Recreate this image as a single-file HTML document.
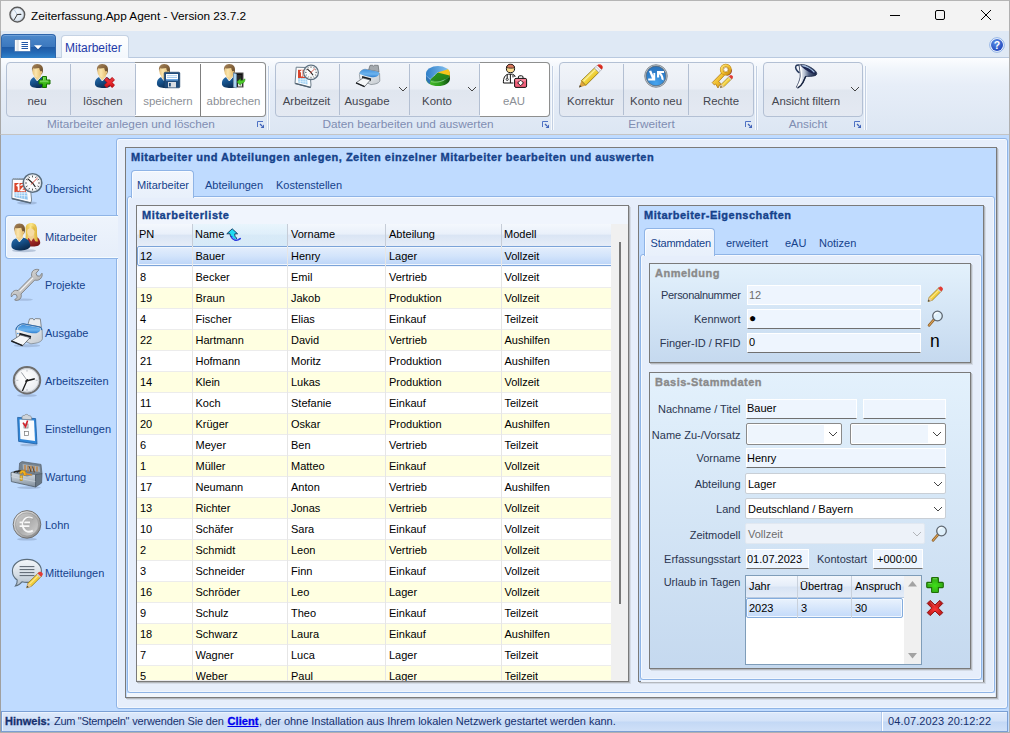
<!DOCTYPE html>
<html><head><meta charset="utf-8"><title>Zeiterfassung.App Agent</title>
<style>
*{box-sizing:border-box;margin:0;padding:0}
html,body{width:1010px;height:733px;overflow:hidden}
body{background:#bfdbff;font-family:"Liberation Sans",sans-serif;font-size:11px;color:#000;position:relative}
.a{position:absolute}
svg{position:absolute;overflow:visible}
.t{position:absolute;white-space:nowrap;line-height:14px;font-size:11px}
#title{left:0;top:0;width:1010px;height:31px;background:#f3f3f3;border-top:1px solid #b5b5b5;border-left:1px solid #b4b4b4}
#title .cap{left:30px;top:7px;font-size:11.8px;line-height:16px;color:#000}
#tabrow{left:0;top:31px;width:1010px;height:27px;background:#dfe9f5;border-left:1px solid #a8a8a8;border-bottom:1px solid #b9c9df}
#appbtn{left:1px;top:34px;width:55px;height:24px;border-radius:4px 4px 0 0;background:linear-gradient(#4d89cb 0%,#3c78be 50%,#1f5ba6 54%,#2468b4 75%,#3182cb 100%);border:1px solid #2f66ab;border-bottom:none;box-shadow:inset 0 1px 0 #6ea0d8}
#rtab{left:61px;top:35px;width:68px;height:23px;border-radius:4px 4px 0 0;background:linear-gradient(#ffffff,#f3f7fc);border:1px solid #c5d2e3;border-bottom:none}
#rtab span{left:3px;top:5px;font-size:12px;color:#1e39a8}
#ribbon{left:0;top:58px;width:1010px;height:77px;background:linear-gradient(#fcfdff 0%,#f0f5fb 15%,#e7eef8 35%,#dce6f3 100%);border-left:1px solid #a8a8a8;border-bottom:1px solid #c4c4c4}
.grp{border:1px solid #b3c0d4;border-radius:4px;background:linear-gradient(#f1f4f9 0%,#eaeef5 48%,#e0e6ef 52%,#e4e9f2 100%)}
.rsep{width:1px;background:#b3bfd2}
.rlab{font-size:11.4px;color:#44464f;text-align:center;line-height:15px}
.rlab.dis{color:#8b8f96}
.gcap{font-size:11.8px;color:#7f8db2;text-align:center;line-height:15px}
.gdiv{width:3px;top:66px;height:64px;background:linear-gradient(90deg,#f7fafd 0,#f7fafd 1px,#c3d0e3 1px,#c3d0e3 2px,#f7fafd 2px)}
.wbtn{background:#fff;border:1px solid #8e8f8f}
.page{border:1px solid #8fb4e6;border-radius:3px;box-shadow:inset 1px 1px 0 #f6f9fe,inset -1px -1px 0 #f1f6fd;background:#e6eefb}
.gbox{border:1px solid #7a7a7a;box-shadow:1px 1px 0 #b4b8be,2px 2px 0 rgba(190,195,205,.45);background:#bfdbff}
.gt{font-weight:bold;color:#15428b;font-size:11px;letter-spacing:.5px;-webkit-text-stroke:.35px currentColor}
.tab{border:1px solid #8fb4e6;border-bottom:none;border-radius:4px 4px 0 0;background:linear-gradient(#f0f5fd,#e8f0fb);box-shadow:inset 1px 1px 0 #fafcff}
.tl{color:#15428b}
.side{color:#15428b;left:45px;z-index:2}
.lab{color:#2b3650;text-align:right;left:639.5px;width:101px}
.inp{background:#eef5fe;border:1px solid #fff;border-bottom-color:#707070;height:20px}
.inp.dis{border-color:#fff}
.cmb{background:#fff;border:1px solid #8a8a8a;border-radius:2px;height:21px}
.cmb2{background:#fff;border:1px solid #c9cfd6;border-radius:2px;height:21px}
.row{left:137px;width:474px;height:21px;border-bottom:1px solid #ececec}
.row.y{background:#ffffe1}
.row.w{background:#fff}
.vs{width:1px;background:#e6e6e6}
.sel{border:1px solid #7ba3d8;border-radius:2px;background:linear-gradient(#e4eefc 0%,#d3e4fb 50%,#bcd5f8 100%);box-shadow:inset 0 0 0 1px #f1f7fe}
.hdr{background:linear-gradient(#f4f8fd 0%,#e6eef9 45%,#d8e4f4 55%,#e4ecf8 100%);border-bottom:1px solid #b9cbe2}
</style></head><body>
<div id="title" class="a"><div class="t cap">Zeiterfassung.App Agent - Version 23.7.2</div></div>
<div id="tabrow" class="a"></div>
<div id="appbtn" class="a"></div>
<div id="rtab" class="a"><span class="t">Mitarbeiter</span></div>
<div id="ribbon" class="a"></div>

<!-- ribbon groups -->
<div class="a grp" style="left:6px;top:62px;width:260px;height:55px"></div>
<div class="a wbtn" style="left:135px;top:62px;width:131px;height:55px;border-radius:0 4px 4px 0;border-left:none"></div>
<div class="a rsep" style="left:70px;top:64px;height:51px"></div>
<div class="a rsep" style="left:135px;top:64px;height:51px"></div>
<div class="a rsep" style="left:200px;top:64px;height:52px;background:#7f7f7f"></div>
<div class="a rlab" style="left:5px;top:94px;width:64px">neu</div>
<div class="a rlab" style="left:71px;top:94px;width:64px">löschen</div>
<div class="a rlab dis" style="left:136px;top:94px;width:64px">speichern</div>
<div class="a rlab dis" style="left:201px;top:94px;width:65px">abbrechen</div>
<div class="a gcap" style="left:6px;top:117px;width:250px">Mitarbeiter anlegen und löschen</div>
<div class="a gdiv" style="left:267px"></div>

<div class="a grp" style="left:275px;top:62px;width:275px;height:55px"></div>
<div class="a wbtn" style="left:480px;top:62px;width:70px;height:55px;border-radius:0 4px 4px 0;border-left:none"></div>
<div class="a rsep" style="left:339px;top:64px;height:51px"></div>
<div class="a rsep" style="left:409px;top:64px;height:51px"></div>
<div class="a rsep" style="left:479px;top:64px;height:51px"></div>
<div class="a rlab" style="left:275px;top:94px;width:63px">Arbeitzeit</div>
<div class="a rlab" style="left:340px;top:94px;width:54px">Ausgabe</div>
<div class="a rlab" style="left:410px;top:94px;width:54px">Konto</div>
<div class="a rlab dis" style="left:479px;top:94px;width:70px">eAU</div>
<div class="a gcap" style="left:276px;top:117px;width:264px">Daten bearbeiten und auswerten</div>
<div class="a gdiv" style="left:551px"></div>

<div class="a grp" style="left:559px;top:62px;width:195px;height:55px"></div>
<div class="a rsep" style="left:623px;top:64px;height:51px"></div>
<div class="a rsep" style="left:688px;top:64px;height:51px"></div>
<div class="a rlab" style="left:559px;top:94px;width:63px">Korrektur</div>
<div class="a rlab" style="left:624px;top:94px;width:64px">Konto neu</div>
<div class="a rlab" style="left:689px;top:94px;width:64px">Rechte</div>
<div class="a gcap" style="left:560px;top:117px;width:183px">Erweitert</div>
<div class="a gdiv" style="left:755px"></div>

<div class="a grp" style="left:763px;top:62px;width:100px;height:55px"></div>
<div class="a rlab" style="left:763px;top:94px;width:86px">Ansicht filtern</div>
<div class="a gcap" style="left:763px;top:117px;width:90px">Ansicht</div>
<div class="a gdiv" style="left:864px"></div>

<!-- sidebar --><div class="a" style="left:0;top:135px;width:1px;height:598px;background:#a0a0a0"></div>
<div class="t side" style="top:182px">Übersicht</div>
<div class="t side" style="top:230px">Mitarbeiter</div>
<div class="t side" style="top:278px">Projekte</div>
<div class="t side" style="top:326px">Ausgabe</div>
<div class="t side" style="top:374px">Arbeitszeiten</div>
<div class="t side" style="top:422px">Einstellungen</div>
<div class="t side" style="top:470px">Wartung</div>
<div class="t side" style="top:518px">Lohn</div>
<div class="t side" style="top:566px">Mitteilungen</div>

<!-- level 1 -->
<div class="a page" id="p1" style="left:116px;top:138px;width:892px;height:571px"></div>
<div class="a" style="left:5px;top:215px;width:113px;height:44px;border:1px solid #8fb4e6;border-right:none;border-radius:4px 0 0 4px;background:linear-gradient(#eef4fc,#e6eefa);box-shadow:inset 1px 1px 0 #f4fbff,inset 0 -1px 0 #f4fbff"></div>
<div class="a gbox" id="g1" style="left:125px;top:147px;width:872px;height:551px"></div>
<div class="t gt" style="left:131px;top:150px">Mitarbeiter und Abteilungen anlegen, Zeiten einzelner Mitarbeiter bearbeiten und auswerten</div>
<div class="a" style="left:127px;top:693px;width:869px;height:4px;background:#f1f6fd"></div>
<div class="a" style="left:995px;top:200px;width:1px;height:497px;background:#dbe8fb"></div>
<div class="a page" id="p2" style="left:127px;top:196px;width:868px;height:497px"></div>
<div class="a tab" style="left:131px;top:170px;width:63px;height:28px"></div>
<div class="t tl" style="left:137px;top:178px">Mitarbeiter</div>
<div class="t tl" style="left:205px;top:178px">Abteilungen</div>
<div class="t tl" style="left:276px;top:178px">Kostenstellen</div>

<!-- list -->
<div class="a gbox" id="g2a" style="left:136px;top:205px;width:493px;height:477px;background:#f0f5fd;overflow:hidden"></div>
<div class="t gt" style="left:142px;top:208px;letter-spacing:.58px">Mitarbeiterliste</div>
<div class="a" id="thead" style="left:137px;top:224px;width:474px;height:22px;background:linear-gradient(#f4f8fd 0%,#e9f0fa 45%,#dae5f4 52%,#e6edf8 100%)"></div>
<div class="a" style="left:193px;top:224px;width:94px;height:22px;background:linear-gradient(rgba(225,243,252,.6),rgba(205,232,248,.6))"></div>
<div class="a" style="left:611px;top:224px;width:17px;height:457px;background:#f0f0f0"></div>
<div class="a" style="left:619px;top:242px;width:2px;height:362px;background:#777"></div>
<div class="a sel" style="left:137px;top:246px;width:480px;height:20px;clip-path:inset(0 6px 0 0)"></div>
<div class="t" style="left:140px;top:249px">12</div>
<div class="t" style="left:195.5px;top:249px">Bauer</div>
<div class="t" style="left:291px;top:249px">Henry</div>
<div class="t" style="left:389px;top:249px">Lager</div>
<div class="t" style="left:504.5px;top:249px">Vollzeit</div>
<div class="a row w" style="top:267px;height:21px"></div>
<div class="t" style="left:140px;top:270px">8</div>
<div class="t" style="left:195.5px;top:270px">Becker</div>
<div class="t" style="left:291px;top:270px">Emil</div>
<div class="t" style="left:389px;top:270px">Vertrieb</div>
<div class="t" style="left:504.5px;top:270px">Vollzeit</div>
<div class="a row y" style="top:288px;height:21px"></div>
<div class="t" style="left:140px;top:291px">19</div>
<div class="t" style="left:195.5px;top:291px">Braun</div>
<div class="t" style="left:291px;top:291px">Jakob</div>
<div class="t" style="left:389px;top:291px">Produktion</div>
<div class="t" style="left:504.5px;top:291px">Vollzeit</div>
<div class="a row w" style="top:309px;height:21px"></div>
<div class="t" style="left:140px;top:312px">4</div>
<div class="t" style="left:195.5px;top:312px">Fischer</div>
<div class="t" style="left:291px;top:312px">Elias</div>
<div class="t" style="left:389px;top:312px">Einkauf</div>
<div class="t" style="left:504.5px;top:312px">Teilzeit</div>
<div class="a row y" style="top:330px;height:21px"></div>
<div class="t" style="left:140px;top:333px">22</div>
<div class="t" style="left:195.5px;top:333px">Hartmann</div>
<div class="t" style="left:291px;top:333px">David</div>
<div class="t" style="left:389px;top:333px">Vertrieb</div>
<div class="t" style="left:504.5px;top:333px">Aushilfen</div>
<div class="a row w" style="top:351px;height:21px"></div>
<div class="t" style="left:140px;top:354px">21</div>
<div class="t" style="left:195.5px;top:354px">Hofmann</div>
<div class="t" style="left:291px;top:354px">Moritz</div>
<div class="t" style="left:389px;top:354px">Produktion</div>
<div class="t" style="left:504.5px;top:354px">Aushilfen</div>
<div class="a row y" style="top:372px;height:21px"></div>
<div class="t" style="left:140px;top:375px">14</div>
<div class="t" style="left:195.5px;top:375px">Klein</div>
<div class="t" style="left:291px;top:375px">Lukas</div>
<div class="t" style="left:389px;top:375px">Produktion</div>
<div class="t" style="left:504.5px;top:375px">Vollzeit</div>
<div class="a row w" style="top:393px;height:21px"></div>
<div class="t" style="left:140px;top:396px">11</div>
<div class="t" style="left:195.5px;top:396px">Koch</div>
<div class="t" style="left:291px;top:396px">Stefanie</div>
<div class="t" style="left:389px;top:396px">Einkauf</div>
<div class="t" style="left:504.5px;top:396px">Teilzeit</div>
<div class="a row y" style="top:414px;height:21px"></div>
<div class="t" style="left:140px;top:417px">20</div>
<div class="t" style="left:195.5px;top:417px">Krüger</div>
<div class="t" style="left:291px;top:417px">Oskar</div>
<div class="t" style="left:389px;top:417px">Produktion</div>
<div class="t" style="left:504.5px;top:417px">Aushilfen</div>
<div class="a row w" style="top:435px;height:21px"></div>
<div class="t" style="left:140px;top:438px">6</div>
<div class="t" style="left:195.5px;top:438px">Meyer</div>
<div class="t" style="left:291px;top:438px">Ben</div>
<div class="t" style="left:389px;top:438px">Vertrieb</div>
<div class="t" style="left:504.5px;top:438px">Teilzeit</div>
<div class="a row y" style="top:456px;height:21px"></div>
<div class="t" style="left:140px;top:459px">1</div>
<div class="t" style="left:195.5px;top:459px">Müller</div>
<div class="t" style="left:291px;top:459px">Matteo</div>
<div class="t" style="left:389px;top:459px">Einkauf</div>
<div class="t" style="left:504.5px;top:459px">Vollzeit</div>
<div class="a row w" style="top:477px;height:21px"></div>
<div class="t" style="left:140px;top:480px">17</div>
<div class="t" style="left:195.5px;top:480px">Neumann</div>
<div class="t" style="left:291px;top:480px">Anton</div>
<div class="t" style="left:389px;top:480px">Vertrieb</div>
<div class="t" style="left:504.5px;top:480px">Aushilfen</div>
<div class="a row y" style="top:498px;height:21px"></div>
<div class="t" style="left:140px;top:501px">13</div>
<div class="t" style="left:195.5px;top:501px">Richter</div>
<div class="t" style="left:291px;top:501px">Jonas</div>
<div class="t" style="left:389px;top:501px">Vertrieb</div>
<div class="t" style="left:504.5px;top:501px">Vollzeit</div>
<div class="a row w" style="top:519px;height:21px"></div>
<div class="t" style="left:140px;top:522px">10</div>
<div class="t" style="left:195.5px;top:522px">Schäfer</div>
<div class="t" style="left:291px;top:522px">Sara</div>
<div class="t" style="left:389px;top:522px">Einkauf</div>
<div class="t" style="left:504.5px;top:522px">Vollzeit</div>
<div class="a row y" style="top:540px;height:21px"></div>
<div class="t" style="left:140px;top:543px">2</div>
<div class="t" style="left:195.5px;top:543px">Schmidt</div>
<div class="t" style="left:291px;top:543px">Leon</div>
<div class="t" style="left:389px;top:543px">Vertrieb</div>
<div class="t" style="left:504.5px;top:543px">Vollzeit</div>
<div class="a row w" style="top:561px;height:21px"></div>
<div class="t" style="left:140px;top:564px">3</div>
<div class="t" style="left:195.5px;top:564px">Schneider</div>
<div class="t" style="left:291px;top:564px">Finn</div>
<div class="t" style="left:389px;top:564px">Einkauf</div>
<div class="t" style="left:504.5px;top:564px">Vollzeit</div>
<div class="a row y" style="top:582px;height:21px"></div>
<div class="t" style="left:140px;top:585px">16</div>
<div class="t" style="left:195.5px;top:585px">Schröder</div>
<div class="t" style="left:291px;top:585px">Leo</div>
<div class="t" style="left:389px;top:585px">Lager</div>
<div class="t" style="left:504.5px;top:585px">Vollzeit</div>
<div class="a row w" style="top:603px;height:21px"></div>
<div class="t" style="left:140px;top:606px">9</div>
<div class="t" style="left:195.5px;top:606px">Schulz</div>
<div class="t" style="left:291px;top:606px">Theo</div>
<div class="t" style="left:389px;top:606px">Einkauf</div>
<div class="t" style="left:504.5px;top:606px">Teilzeit</div>
<div class="a row y" style="top:624px;height:21px"></div>
<div class="t" style="left:140px;top:627px">18</div>
<div class="t" style="left:195.5px;top:627px">Schwarz</div>
<div class="t" style="left:291px;top:627px">Laura</div>
<div class="t" style="left:389px;top:627px">Einkauf</div>
<div class="t" style="left:504.5px;top:627px">Aushilfen</div>
<div class="a row w" style="top:645px;height:21px"></div>
<div class="t" style="left:140px;top:648px">7</div>
<div class="t" style="left:195.5px;top:648px">Wagner</div>
<div class="t" style="left:291px;top:648px">Luca</div>
<div class="t" style="left:389px;top:648px">Lager</div>
<div class="t" style="left:504.5px;top:648px">Teilzeit</div>
<div class="a row y" style="top:666px;height:15px"></div>
<div class="t" style="left:140px;top:669px;height:12px;overflow:hidden">5</div>
<div class="t" style="left:195.5px;top:669px;height:12px;overflow:hidden">Weber</div>
<div class="t" style="left:291px;top:669px;height:12px;overflow:hidden">Paul</div>
<div class="t" style="left:389px;top:669px;height:12px;overflow:hidden">Lager</div>
<div class="t" style="left:504.5px;top:669px;height:12px;overflow:hidden">Teilzeit</div>
<div class="a vs" style="left:192px;top:224px;height:457px"></div>
<div class="a vs" style="left:287px;top:224px;height:457px"></div>
<div class="a vs" style="left:385px;top:224px;height:457px"></div>
<div class="a vs" style="left:501px;top:224px;height:457px"></div>
<div class="a" style="left:192px;top:224px;width:1px;height:22px;background:#c6cdd8"></div>
<div class="a" style="left:287px;top:224px;width:1px;height:22px;background:#c6cdd8"></div>
<div class="a" style="left:385px;top:224px;width:1px;height:22px;background:#c6cdd8"></div>
<div class="a" style="left:501px;top:224px;width:1px;height:22px;background:#c6cdd8"></div>
<div class="t" style="left:139px;top:227px">PN</div>
<div class="t" style="left:195px;top:227px">Name</div>
<div class="t" style="left:291px;top:227px">Vorname</div>
<div class="t" style="left:389px;top:227px">Abteilung</div>
<div class="t" style="left:504px;top:227px">Modell</div>

<!-- properties -->
<div class="a gbox" id="g2b" style="left:638px;top:205px;width:346px;height:477px"></div>
<div class="t gt" style="left:644px;top:208px">Mitarbeiter-Eigenschaften</div>
<div class="a" style="left:641px;top:680px;width:342px;height:2px;background:#eef4fd"></div>
<div class="a page" id="p3" style="left:640px;top:254px;width:342px;height:426px"></div>
<div class="a tab" style="left:644px;top:228px;width:71px;height:28px"></div>
<div class="t tl" style="left:650.5px;top:236px;letter-spacing:-.2px">Stammdaten</div>
<div class="t tl" style="left:726px;top:236px">erweitert</div>
<div class="t tl" style="left:785px;top:236px">eAU</div>
<div class="t tl" style="left:819px;top:236px">Notizen</div>

<div class="a gbox" id="g3a" style="left:649px;top:263px;width:322px;height:100px;background:linear-gradient(#e3f1fc,#c5d9ef)"></div>
<div class="t gt" style="left:655px;top:266px;color:#8a8a8a">Anmeldung</div>
<div class="t lab" style="top:288px;letter-spacing:-.3px">Personalnummer</div>
<div class="t lab" style="top:312px">Kennwort</div>
<div class="t lab" style="top:336px">Finger-ID / RFID</div>
<div class="a inp dis" style="left:747px;top:285px;width:174px;height:20px"></div>
<div class="a inp" style="left:747px;top:309px;width:174px"></div>
<div class="a inp" style="left:747px;top:333px;width:174px"></div>
<div class="t" style="left:749px;top:288px;color:#6d6d6d">12</div>
<div class="t" style="left:749px;top:311px;font-size:12px">●</div>
<div class="t" style="left:749px;top:335px">0</div>
<div class="t" style="left:930px;top:331px;font-size:17.5px;line-height:20px">n</div>

<div class="a gbox" id="g3b" style="left:649px;top:372px;width:322px;height:297px;background:linear-gradient(#e3f1fc,#c5d9ef)"></div>
<div class="t gt" style="left:655px;top:375px;color:#8a8a8a">Basis-Stammdaten</div>
<div class="t lab" style="top:402px">Nachname / Titel</div>
<div class="t lab" style="top:428px">Name Zu-/Vorsatz</div>
<div class="t lab" style="top:451px">Vorname</div>
<div class="t lab" style="top:477px">Abteilung</div>
<div class="t lab" style="top:502px">Land</div>
<div class="t lab" style="top:528px">Zeitmodell</div>
<div class="t lab" style="top:552px">Erfassungsstart</div>
<div class="t lab" style="top:575px">Urlaub in Tagen</div>
<div class="a inp" style="left:746px;top:399px;width:111px"></div>
<div class="a inp" style="left:863px;top:399px;width:83px"></div>
<div class="t" style="left:747px;top:401px">Bauer</div>
<div class="a cmb" style="left:746px;top:423px;width:96px;height:22px"><div class="a" style="left:1px;top:1px;width:76px;height:18px;background:#eef5fd"></div></div>
<div class="a cmb" style="left:850px;top:423px;width:96px;height:22px"><div class="a" style="left:1px;top:1px;width:76px;height:18px;background:#eef5fd"></div></div>
<div class="a inp" style="left:746px;top:448px;width:200px"></div>
<div class="t" style="left:747px;top:451px">Henry</div>
<div class="a cmb2" style="left:745px;top:473px;width:201px"></div>
<div class="t" style="left:748px;top:477px">Lager</div>
<div class="a cmb2" style="left:745px;top:498px;width:201px"></div>
<div class="t" style="left:748px;top:502px">Deutschland / Bayern</div>
<div class="a cmb2" style="left:745px;top:523px;width:180px;background:#edf2f9;border-color:#e1e8f1"></div>
<div class="t" style="left:748px;top:527px;color:#6d6d6d">Vollzeit</div>
<div class="a inp" style="left:746px;top:549px;width:63px"></div>
<div class="t" style="left:747px;top:552px">01.07.2023</div>
<div class="t" style="left:817px;top:552px;color:#2b3650">Kontostart</div>
<div class="a inp" style="left:873px;top:549px;width:50px"></div>
<div class="t" style="left:877px;top:552px">+000:00</div>

<!-- urlaub table -->
<div class="a" style="left:745px;top:575px;width:177px;height:90px;background:#fff;border:1px solid #7f9db9"></div>
<div class="a" style="left:746px;top:576px;width:158px;height:22px;background:linear-gradient(#f4f8fd 0%,#e6eef9 45%,#d8e4f4 55%,#e4ecf8 100%);border-bottom:1px solid #b9cbe2"></div>
<div class="a" style="left:904px;top:576px;width:17px;height:88px;background:#f0f0f0"></div>
<div class="a" style="left:746px;top:598px;width:157px;height:20px;border:1px solid #84acdd;border-radius:2px;background:linear-gradient(#e9f2fd 0%,#d6e6fb 50%,#c3dafa 100%);box-shadow:inset 0 0 0 1px #f1f7fe"></div>
<div class="a" style="left:797px;top:576px;width:1px;height:42px;background:#c9d1dc"></div>
<div class="a" style="left:851px;top:576px;width:1px;height:42px;background:#c9d1dc"></div>
<div class="t" style="left:749px;top:579px">Jahr</div>
<div class="t" style="left:800px;top:579px">Übertrag</div>
<div class="t" style="left:855px;top:579px">Anspruch</div>
<div class="t" style="left:749px;top:600.5px">2023</div>
<div class="t" style="left:801px;top:600.5px">3</div>
<div class="t" style="left:855px;top:600.5px">30</div>

<!-- status bar -->
<div class="a" id="status" style="left:1px;top:711px;width:1007px;height:21px;background:linear-gradient(#dde9fb 0%,#d3e2f8 48%,#c3d8f5 52%,#cfe0f8 100%);border:1px solid #7a9fd4;box-shadow:inset 1px 1px 0 #eaf2fd"></div>
<div class="a" style="left:0;top:732px;width:1010px;height:1px;background:#b0b0b0"></div>
<div class="t" style="left:5px;top:714px;color:#15306e;font-weight:bold;-webkit-text-stroke:.3px currentColor">Hinweis:</div>
<div class="t" style="left:54px;top:714px;color:#15306e;letter-spacing:-.3px">Zum "Stempeln"</div>
<div class="t" style="left:132.2px;top:714px;color:#15306e;letter-spacing:-.16px">verwenden Sie den</div>
<div class="t" style="left:227.5px;top:714px;color:#0000ee;font-weight:bold;text-decoration:underline;letter-spacing:.07px;-webkit-text-stroke:.3px currentColor">Client</div>
<div class="t" style="left:259px;top:714px;color:#15306e;letter-spacing:-.03px">, der ohne Installation aus Ihrem lokalen Netzwerk gestartet werden kann.</div>
<div class="a" style="left:881px;top:712px;width:1px;height:19px;background:#b3cbee"></div>
<div class="a" style="left:882px;top:712px;width:1px;height:19px;background:#ffffff"></div>
<div class="t" style="left:888px;top:714px;color:#15306e;letter-spacing:.12px">04.07.2023 20:12:22</div>

<!-- icons -->
<!-- title clock -->
<svg style="left:8px;top:6px" width="18" height="18" viewBox="0 0 18 18">
<defs><radialGradient id="clk" cx="0.4" cy="0.35" r="0.8"><stop offset="0" stop-color="#f4f8fc"/><stop offset="0.7" stop-color="#dde8f3"/><stop offset="1" stop-color="#c3d0df"/></radialGradient></defs>
<circle cx="9.3" cy="8.6" r="7.3" fill="url(#clk)" stroke="#585858" stroke-width="1.5"/>
<circle cx="9.3" cy="8.6" r="6.3" fill="none" stroke="#b9bec6" stroke-width=".5"/>
<path d="M9.3 8.6 L6.4 4" stroke="#a3bdd8" stroke-width=".8" fill="none"/>
<path d="M9.2 8.5 L12.8 8.4" stroke="#3c3c3c" stroke-width="1.2" fill="none" stroke-linecap="round"/>
<path d="M9.4 8.4 L6.3 13.6" stroke="#3c3c3c" stroke-width="1" fill="none" stroke-linecap="round"/>
</svg>
<!-- window controls -->
<svg style="left:885px;top:5px" width="120" height="22" viewBox="0 0 120 22">
<path d="M5 10.5 H15" stroke="#000" stroke-width="1"/>
<rect x="50.5" y="5.5" width="9" height="9" rx="1.5" fill="none" stroke="#000" stroke-width="1"/>
<path d="M96 5 L106 15 M106 5 L96 15" stroke="#000" stroke-width="1"/>
</svg>
<div class="a" style="left:1009px;top:0;width:1px;height:733px;background:#b0b0b0"></div>
<!-- app button icon -->
<svg style="left:14px;top:39px" width="30" height="14" viewBox="0 0 30 14">
<defs><linearGradient id="abl" x1="0" x2="1"><stop offset="0" stop-color="#fff"/><stop offset="1" stop-color="#d4d8de"/></linearGradient></defs>
<rect x="0.5" y="0.5" width="16" height="12" fill="#fff" stroke="#2b5fa3" stroke-width="1" stroke-opacity=".6"/>
<rect x="1" y="1" width="3.6" height="11" fill="url(#abl)"/>
<path d="M7.5 3.5 H14 M7.5 5.5 H14 M7.5 7.5 H14 M7.5 9.5 H14" stroke="#2458a8" stroke-width="1"/>
<path d="M20 6.3 H28 L24 10.3 Z" fill="#fff"/>
<path d="M20.5 7.6 L24 11.2 L27.5 7.6" fill="none" stroke="#1c4f94" stroke-width="1" stroke-opacity=".7"/>
</svg>
<!-- help -->
<svg style="left:989px;top:37px" width="16" height="16" viewBox="0 0 16 16">
<defs><radialGradient id="hlp" cx="0.4" cy="0.3" r="0.8"><stop offset="0" stop-color="#5b8fe6"/><stop offset="1" stop-color="#1a3fb8"/></radialGradient></defs>
<circle cx="8" cy="8" r="7.3" fill="#f4f8ff" stroke="#7aa2e0" stroke-width=".8"/>
<circle cx="8" cy="8" r="6" fill="url(#hlp)"/>
<text x="8" y="11.8" text-anchor="middle" font-family="Liberation Sans" font-weight="bold" font-size="10.5" fill="#fff">?</text>
</svg>
<!-- shared defs -->
<svg width="0" height="0" style="left:0;top:0"><defs>
<linearGradient id="ubody" x1="0" y1="0" x2="0.6" y2="1"><stop offset="0" stop-color="#2a6fae"/><stop offset=".5" stop-color="#155089"/><stop offset="1" stop-color="#0b2a4d"/></linearGradient>
<linearGradient id="uskin" x1="0" y1="0" x2="1" y2="0"><stop offset="0" stop-color="#e9c47c"/><stop offset=".35" stop-color="#fbe6ae"/><stop offset="1" stop-color="#e2b866"/></linearGradient>
<linearGradient id="uhair" x1="0" y1="0" x2="1" y2="1"><stop offset="0" stop-color="#a5845a"/><stop offset=".5" stop-color="#86653e"/><stop offset="1" stop-color="#5a4124"/></linearGradient>
<linearGradient id="gplus" x1="0" y1="0" x2="0" y2="1"><stop offset="0" stop-color="#6bd94a"/><stop offset="1" stop-color="#22a800"/></linearGradient>
<linearGradient id="rx" x1="0" y1="0" x2="0" y2="1"><stop offset="0" stop-color="#d8343a"/><stop offset=".5" stop-color="#f02a2f"/><stop offset="1" stop-color="#c4141a"/></linearGradient>
</defs></svg>
<!-- neu -->
<svg style="left:29px;top:64px" width="24" height="24" viewBox="0 0 24 24"><g>
<path d="M1 20.5 C.6 15.5 3.5 12.8 8.5 12.6 C13.5 12.4 17 14.5 17.4 20 C17.6 22.5 14 24 9.5 24 C5 24 1.3 23 1 20.5Z" fill="url(#ubody)"/>
<path d="M5.2 13 L8.3 17 L12 12.6 L11.5 10 L6 10Z" fill="#f3d695"/>
<path d="M5.4 13.3 L8.3 17 L11.8 13" fill="none" stroke="#fff" stroke-width="1" stroke-opacity=".8"/>
<ellipse cx="8.3" cy="7.2" rx="4.9" ry="6" fill="url(#uskin)"/>
<path d="M3.2 7.5 C2.2 3 4.5 .2 8 .1 C12.5 0 14.6 3 13.9 7.2 C13.6 8.8 13.1 9.8 12.5 10.4 C12.6 8.6 12.3 7.6 11.5 7.6 C10.8 6.5 10.3 5.2 10.2 4 C8 4.6 5.5 4.6 4.2 4.2 C3.6 5.2 3.4 6.3 3.2 7.5Z" fill="url(#uhair)"/>
<ellipse cx="12.2" cy="8.3" rx=".9" ry="1.4" fill="#e9c47c"/>
</g>
<path d="M13.5 12.5 h4 v3.5 h3.5 v4 h-3.5 v3.5 h-4 v-3.5 h-3.5 v-4 h3.5z" fill="url(#gplus)" stroke="#167000" stroke-width="1" stroke-linejoin="round"/>
<path d="M11 17.2 h8 M14.6 13.6 v2.6" stroke="#a5ea8e" stroke-width=".8" fill="none" stroke-opacity=".8"/></svg>
<!-- loeschen -->
<svg style="left:94px;top:64px" width="24" height="24" viewBox="0 0 24 24"><g>
<path d="M1 20.5 C.6 15.5 3.5 12.8 8.5 12.6 C13.5 12.4 17 14.5 17.4 20 C17.6 22.5 14 24 9.5 24 C5 24 1.3 23 1 20.5Z" fill="url(#ubody)"/>
<path d="M5.2 13 L8.3 17 L12 12.6 L11.5 10 L6 10Z" fill="#f3d695"/>
<path d="M5.4 13.3 L8.3 17 L11.8 13" fill="none" stroke="#fff" stroke-width="1" stroke-opacity=".8"/>
<ellipse cx="8.3" cy="7.2" rx="4.9" ry="6" fill="url(#uskin)"/>
<path d="M3.2 7.5 C2.2 3 4.5 .2 8 .1 C12.5 0 14.6 3 13.9 7.2 C13.6 8.8 13.1 9.8 12.5 10.4 C12.6 8.6 12.3 7.6 11.5 7.6 C10.8 6.5 10.3 5.2 10.2 4 C8 4.6 5.5 4.6 4.2 4.2 C3.6 5.2 3.4 6.3 3.2 7.5Z" fill="url(#uhair)"/>
<ellipse cx="12.2" cy="8.3" rx=".9" ry="1.4" fill="#e9c47c"/>
</g>
<path d="M11.5 14.5 L19.5 22.5 M19.5 14.5 L11.5 22.5" stroke="#b01218" stroke-width="4" stroke-linecap="butt"/>
<path d="M11.5 14.5 L19.5 22.5 M19.5 14.5 L11.5 22.5" stroke="url(#rx)" stroke-width="2.8" stroke-linecap="butt"/></svg>
<!-- speichern -->
<svg style="left:156px;top:64px" width="26" height="24" viewBox="0 0 26 24"><g>
<path d="M1 20.5 C.6 15.5 3.5 12.8 8.5 12.6 C13.5 12.4 17 14.5 17.4 20 C17.6 22.5 14 24 9.5 24 C5 24 1.3 23 1 20.5Z" fill="url(#ubody)"/>
<path d="M5.2 13 L8.3 17 L12 12.6 L11.5 10 L6 10Z" fill="#f3d695"/>
<path d="M5.4 13.3 L8.3 17 L11.8 13" fill="none" stroke="#fff" stroke-width="1" stroke-opacity=".8"/>
<ellipse cx="8.3" cy="7.2" rx="4.9" ry="6" fill="url(#uskin)"/>
<path d="M3.2 7.5 C2.2 3 4.5 .2 8 .1 C12.5 0 14.6 3 13.9 7.2 C13.6 8.8 13.1 9.8 12.5 10.4 C12.6 8.6 12.3 7.6 11.5 7.6 C10.8 6.5 10.3 5.2 10.2 4 C8 4.6 5.5 4.6 4.2 4.2 C3.6 5.2 3.4 6.3 3.2 7.5Z" fill="url(#uhair)"/>
<ellipse cx="12.2" cy="8.3" rx=".9" ry="1.4" fill="#e9c47c"/>
</g>
<rect x="8.2" y="8.2" width="15.6" height="15.6" rx="1" fill="#1f4c7c" stroke="#163a60" stroke-width=".6"/>
<rect x="10" y="10" width="12" height="5" fill="#fff"/>
<path d="M11 11.7 h10 M11 13.5 h10" stroke="#8fbfe8" stroke-width=".8"/>
<rect x="10" y="15" width="12" height="1.6" fill="#6aa6e0"/>
<rect x="12" y="18" width="8" height="5.4" fill="#d9dde2"/>
<rect x="13" y="19" width="1.8" height="3.4" fill="#1f4c7c"/></svg>
<!-- abbrechen -->
<svg style="left:221px;top:64px" width="26" height="24" viewBox="0 0 26 24"><g>
<path d="M1 20.5 C.6 15.5 3.5 12.8 8.5 12.6 C13.5 12.4 17 14.5 17.4 20 C17.6 22.5 14 24 9.5 24 C5 24 1.3 23 1 20.5Z" fill="url(#ubody)"/>
<path d="M5.2 13 L8.3 17 L12 12.6 L11.5 10 L6 10Z" fill="#f3d695"/>
<path d="M5.4 13.3 L8.3 17 L11.8 13" fill="none" stroke="#fff" stroke-width="1" stroke-opacity=".8"/>
<ellipse cx="8.3" cy="7.2" rx="4.9" ry="6" fill="url(#uskin)"/>
<path d="M3.2 7.5 C2.2 3 4.5 .2 8 .1 C12.5 0 14.6 3 13.9 7.2 C13.6 8.8 13.1 9.8 12.5 10.4 C12.6 8.6 12.3 7.6 11.5 7.6 C10.8 6.5 10.3 5.2 10.2 4 C8 4.6 5.5 4.6 4.2 4.2 C3.6 5.2 3.4 6.3 3.2 7.5Z" fill="url(#uhair)"/>
<ellipse cx="12.2" cy="8.3" rx=".9" ry="1.4" fill="#e9c47c"/>
</g>
<rect x="12.5" y="9" width="9.5" height="14" fill="#111" stroke="#555" stroke-width="1"/>
<rect x="15" y="11" width="5.5" height="12" fill="#2a2a2a"/>
<rect x="17" y="19" width="4" height="3.5" fill="#ddd"/>
<path d="M12.5 9 L15.5 10 V24 L12.5 23Z" fill="#a9d3f2" stroke="#6b90b3" stroke-width=".5"/>
<path d="M16 18 L19.5 14.8 V16.6 C21.5 16.6 23 16 24 14.8 C24 18 22.5 19.6 19.5 19.6 V21.2Z" fill="#4ccb2a" stroke="#2b9a10" stroke-width=".6"/></svg>
<!-- Arbeitzeit: calendar+clock, origin (294,63) -->
<svg style="left:294px;top:63px" width="27" height="26" viewBox="0 0 27 26">
<defs><radialGradient id="cf" cx=".45" cy=".4" r=".7"><stop offset="0" stop-color="#fff"/><stop offset=".8" stop-color="#f4f6f8"/><stop offset="1" stop-color="#c9d2da"/></radialGradient></defs>
<path d="M2.2 4.2 L15.5 4.6 L17 22 L16.5 24.6 L1 20.6Z" fill="#fdfdfd" stroke="#6e7f8d" stroke-width="1"/>
<path d="M1.4 20.4 L16.6 24.4" stroke="#4f6070" stroke-width="1.3"/>
<rect x="4" y="6.8" width="8.5" height="8.2" fill="#d8452c"/>
<path d="M6.3 9 L7.8 8 V13.6" stroke="#fff" stroke-width="1.5" fill="none"/>
<path d="M9.6 8.6 H11.8 V11 H9.8 V13.4 H12" stroke="#fff" stroke-width="1.1" fill="none"/>
<path d="M4 15 H13 L13.6 21.5 L4.2 19.6Z" fill="#9fd0f3"/>
<path d="M4.3 16.6 H13 M4.3 18.3 L13.3 19 M6.5 15 V20 M9 15 V20.6 M11.3 15 V21" stroke="#e9f5fd" stroke-width=".6"/>
<circle cx="17" cy="9.4" r="7.3" fill="url(#cf)" stroke="#5b6e7e" stroke-width="1.3"/>
<circle cx="17" cy="9.4" r="6.3" fill="none" stroke="#d5dbe1" stroke-width=".5"/>
<g stroke="#555" stroke-width=".8"><path d="M17 3.4 v1.6 M17 13.8 v1.6 M11 9.4 h1.6 M21.4 9.4 h1.6 M14 4.2 l.6 1.1 M20 4.2 l-.6 1.1 M11.8 6.4 l1.1 .6 M22.2 6.4 l-1.1 .6 M11.8 12.4 l1.1 -.6 M22.2 12.4 l-1.1 -.6 M14 14.6 l.6 -1.1 M20 14.6 l-.6 -1.1"/></g>
<path d="M13.2 5.8 L17 9.4 L19 12.2" stroke="#222" stroke-width="1.1" fill="none"/>
<path d="M15.8 10.4 L21 5.6" stroke="#d23b2e" stroke-width=".8"/>
</svg>
<!-- Ausgabe: printer origin (355,64) -->
<svg style="left:355px;top:64px" width="26" height="24" viewBox="0 0 26 24">
<defs><linearGradient id="prb" x1="0" y1="0" x2="0" y2="1"><stop offset="0" stop-color="#3f8fdc"/><stop offset=".6" stop-color="#6db4ee"/><stop offset="1" stop-color="#2f7fd0"/></linearGradient>
<linearGradient id="prw" x1="0" y1="0" x2="1" y2="1"><stop offset="0" stop-color="#ffffff"/><stop offset="1" stop-color="#c3c9cf"/></linearGradient></defs>
<path d="M13.6 6 L15 1.4 L17.6 1.2 L18.4 2.4 L19.4 1.2 L23.2 1.4 L24 8Z" fill="#a4a9ae" stroke="#6d7276" stroke-width=".8"/>
<path d="M4.4 10.5 C4.4 8 7 5.4 10 5.2 L22 7.4 C24 8 24.6 9 24.6 10 L24.8 16.5 C24.8 18 23 19.4 20 20 L16 20.6 L5 15.6Z" fill="url(#prw)" stroke="#7d858c" stroke-width=".7"/>
<path d="M4.6 10 C4.6 7.6 7 5.4 10 5.2 L22 7.4 C23.8 7.8 24.4 8.8 24.2 10 C23 12.5 20 13.6 17 13.2 C12 12.4 7 11 4.6 10Z" fill="url(#prb)"/>
<path d="M7.2 12 L16.2 14.6 L15.6 17.2 L7 14.6Z" fill="#15181d"/>
<path d="M8 14 L15.4 16 L9.6 22.6 L1 18.8Z" fill="#f5f7f9" stroke="#50565c" stroke-width=".7"/>
<path d="M1 18.8 L9.6 22.6" stroke="#1d2024" stroke-width="1.3"/>
</svg>
<!-- Konto: pie origin (425,65) -->
<svg style="left:425px;top:65px" width="26" height="22" viewBox="0 0 26 22">
<defs><linearGradient id="pb" x1="0" y1="0" x2="1" y2="0"><stop offset="0" stop-color="#2f7fc9"/><stop offset="1" stop-color="#8cc6f2"/></linearGradient>
<linearGradient id="pg" x1="0" y1="0" x2="1" y2="1"><stop offset="0" stop-color="#2e9a1e"/><stop offset="1" stop-color="#237a1a"/></linearGradient>
<linearGradient id="pgs" x1="0" y1="0" x2="1" y2="0"><stop offset="0" stop-color="#4cc52e"/><stop offset=".6" stop-color="#2c9a1c"/><stop offset="1" stop-color="#0d4a10"/></linearGradient></defs>
<path d="M1 8.6 V13.4 C1 18 6.4 21 13 21 C19.6 21 25 18 25 13.4 V8.6Z" fill="url(#pgs)"/>
<path d="M1 8.6 V13.4 C1 15.6 2.4 17.6 4.8 19 L5.6 14.4Z" fill="#2f74b8"/>
<ellipse cx="13" cy="8.6" rx="12" ry="7.6" fill="url(#pb)"/>
<path d="M12.6 7.4 L5.2 14.4 C7 15.6 10 16.2 13 16.2 C19.6 16.2 25 13 25 8.6 C25 8.2 24.9 7.8 24.8 7.4Z" fill="url(#pg)"/>
<path d="M12.6 7.4 L23 4.2 C24.4 5.4 25 7 25 8.6 C25 9.2 24.9 9.8 24.6 10.4Z" fill="#f8c51c"/>
<path d="M24.6 10.2 C25 9.6 25 9 25 8.6 V12 C25 12.6 24.9 13 24.7 13.6Z" fill="#c9930a"/>
<path d="M12.6 7.4 L5.2 14.4 L1.6 11" stroke="#cfe6f8" stroke-width=".7" fill="none" stroke-dasharray="1.2 .6"/>
<path d="M6 16.6 C10 17.8 16 17.2 19.6 14.8" stroke="#b6eba6" stroke-width=".7" fill="none" stroke-opacity=".8"/>
</svg>
<!-- eAU origin (502,63) -->
<svg style="left:502px;top:63px" width="27" height="26" viewBox="0 0 27 26">
<circle cx="8.5" cy="5.6" r="4.1" fill="#fcdc8f" stroke="#111" stroke-width="1"/>
<path d="M4.6 4.6 C5 2 6.6 1.2 8.5 1.2 C10.6 1.2 12.2 2.2 12.5 4.8 C10.5 5.4 7 5.2 4.6 4.6Z" fill="#d9775b" stroke="#111" stroke-width=".7"/>
<path d="M1.4 20 C1.2 15 3 11.6 6.4 11.2 H10.4 C12 11.4 13 12.4 13 14 M1.4 20 H11.4" fill="#fff" stroke="#111" stroke-width="1"/>
<path d="M8.4 11.2 V20 M5.2 11.6 V15.2 M11 12 V14.4" stroke="#111" stroke-width="1" fill="none"/>
<circle cx="5.2" cy="16.4" r="1.1" fill="#fff" stroke="#111" stroke-width=".8"/>
<path d="M16.4 15.4 V14 C16.4 13.2 17 12.8 17.8 12.8 H19.6 C20.4 12.8 21 13.2 21 14 V15.4" fill="#fff" stroke="#111" stroke-width="1"/>
<rect x="12.6" y="15.4" width="12" height="9" rx="1.4" fill="#f1607a" stroke="#111" stroke-width="1"/>
<rect x="13.4" y="16.2" width="10.4" height="2" fill="#f58a9e"/>
<path d="M18.6 17.2 L20 18.6 L21.6 19.9 L20 21.2 L18.6 22.8 L17.2 21.2 L15.6 19.9 L17.2 18.6Z" fill="#fff" stroke="#111" stroke-width=".9"/>
</svg>
<!-- Korrektur: big pencil origin (578,63) -->
<svg style="left:578px;top:63px" width="26" height="26" viewBox="0 0 26 26">
<defs><linearGradient id="py" x1="0" y1="0" x2="1" y2="1"><stop offset="0" stop-color="#c9a21c"/><stop offset=".35" stop-color="#f6e465"/><stop offset=".6" stop-color="#ecc92a"/><stop offset="1" stop-color="#b58d12"/></linearGradient></defs>
<path d="M1 24.6 L3.4 17.6 L6 17 L8 20.6 L7.8 22.4Z" fill="#dda43e"/>
<path d="M1 24.6 L1.9 21.9 L3.6 23.6Z" fill="#333a45"/>
<path d="M3.4 17.6 L16.4 5 L20.8 9.4 L7.8 22.4Z" fill="url(#py)" stroke="#7e6410" stroke-width=".7"/>
<path d="M5.6 18.2 L17.6 6.4" stroke="#fbf0a0" stroke-width="1.2" stroke-opacity=".9"/>
<path d="M16.4 5 L19.2 2.2 L23.6 6.6 L20.8 9.4Z" fill="#f4f5f7" stroke="#8a8f99" stroke-width=".6"/>
<path d="M18 3.6 L22.4 8" stroke="#c4c8ce" stroke-width="1"/>
<path d="M19.2 2.2 C20.4 .8 22.4 .8 23.8 2.2 C25.2 3.6 25 5.4 23.6 6.6Z" fill="#d8281c"/>
<path d="M20.4 1.8 C21.4 1.2 22.4 1.6 23.2 2.4" stroke="#f58a7c" stroke-width=".8" fill="none"/>
</svg>
<!-- Konto neu origin (644,64) -->
<svg style="left:644px;top:64px" width="24" height="24" viewBox="0 0 24 24">
<defs><radialGradient id="kn" cx=".5" cy=".85" r=".9"><stop offset="0" stop-color="#46a4ee"/><stop offset=".6" stop-color="#2f80cc"/><stop offset="1" stop-color="#2a6fb6"/></radialGradient></defs>
<circle cx="12" cy="12" r="11.3" fill="#c8ced4" stroke="#7c858d" stroke-width=".9"/>
<circle cx="12" cy="12" r="9.9" fill="url(#kn)" stroke="#4f5e6c" stroke-width=".7"/>
<path d="M5 7.2 L7.2 6.6 L9.4 11.8 L9.4 9 L11.2 9 L11.2 16.6 L4.2 16.6 L4.2 14.6 L8 14.6Z" fill="#fff"/>
<path d="M13 7 H20 V9 L17 9 C19 11 19.8 13.6 19.6 16.4 L17.4 15.2 C17.4 13 16.6 11.6 15.2 10.2 L15.2 13.6 L13 13.6Z" fill="#fff"/>
</svg>
<!-- Rechte: key+pencil origin (710,63) -->
<svg style="left:710px;top:63px" width="26" height="26" viewBox="0 0 26 26">
<defs><linearGradient id="kg" x1="0" y1="0" x2="1" y2="1"><stop offset="0" stop-color="#fbe27a"/><stop offset=".5" stop-color="#f2c131"/><stop offset="1" stop-color="#c98a12"/></linearGradient></defs>
<path d="M16.6 12 C19.4 12.2 21.6 9.8 21.4 6.6" stroke="#7a1616" stroke-width="1.4" fill="none" stroke-opacity=".8"/>
<path d="M12 9.6 L2.2 19.6 L4.4 22 L5.6 21 L8 25 L9.6 22 L11.6 21.4 L9.8 19.4 L8.6 18.6 L14.4 12.4Z" fill="url(#kg)" stroke="#a86f0c" stroke-width=".7"/>
<circle cx="15.8" cy="6.6" r="4.2" fill="none" stroke="#b67f10" stroke-width="3.4"/>
<circle cx="15.8" cy="6.6" r="4.2" fill="none" stroke="url(#kg)" stroke-width="2.4"/>
<circle cx="15.8" cy="6.6" r="2.1" fill="#fdfdfd" stroke="#b67f10" stroke-width=".5"/>
<g transform="translate(9.6 11.6) scale(.84)"><g>
<path d="M1 15.6 L2.2 11.2 L12 1.6 L15 4.6 L5.4 14.2Z" fill="#f2cf3a" stroke="#8a6d1c" stroke-width=".7"/>
<path d="M3.4 12.4 L13 2.8" stroke="#fbe88a" stroke-width="1.1"/>
<path d="M1 15.6 L2.2 11.2 L5.4 14.2Z" fill="#e8c99a"/>
<path d="M1 15.6 L1.5 13.6 L2.8 14.9Z" fill="#333"/>
<path d="M11 2.6 L12.6 1 C13.3 .3 14.2 .5 15.2 1.5 C16.1 2.4 16.2 3.3 15.6 3.9 L14 5.6Z" fill="#e23b34"/>
<path d="M10.3 3.3 L11.2 2.4 L14.2 5.4 L13.3 6.3Z" fill="#c9ccd1"/>
</g></g>
</svg>
<!-- Ansicht filtern: funnel origin (794,63) -->
<svg style="left:794px;top:63px" width="26" height="26" viewBox="0 0 26 26">
<defs><linearGradient id="fn" x1="0" y1="0" x2="1" y2="0"><stop offset="0" stop-color="#ffffff"/><stop offset=".22" stop-color="#f2f4f8"/><stop offset=".42" stop-color="#aeb9cc"/><stop offset=".62" stop-color="#4d5d80"/><stop offset="1" stop-color="#16223f"/></linearGradient></defs>
<path d="M5.4 2 C2 1.4 .8 3.6 2.2 6.4 C3 8 4.4 9.2 5.4 9.8" fill="none" stroke="#24365a" stroke-width="1.5"/>
<path d="M5 2.4 C7 .6 12 1.6 17 4.6 C21 7 23.4 9.8 22.6 11.4 C21.6 13.4 16 13.4 11.6 13.4 L9.2 19 C7.6 22 5.4 24.2 3.6 25 L2.4 24.2 C4 21 5.4 18 6.2 14 C6.4 10 5.6 5.6 5 2.4Z" fill="url(#fn)" stroke="#1d2b4a" stroke-width=".8"/>
<path d="M6.4 2.4 C9 2 13.4 3.6 17 6 C20 8 21.8 10 21.4 11 C18 10.6 13 8.6 6.4 2.4Z" fill="#1b2550"/>
<path d="M8.4 2.6 C12 3 17.6 6 20.4 9.4" fill="none" stroke="#a9c4e6" stroke-width="1.1"/>
<path d="M6.4 4.4 C7.2 8 7.8 12 7.2 15 C6.6 18 5.2 21.4 3.8 23.6" fill="none" stroke="#fff" stroke-width="1.1" stroke-opacity=".9"/>
<path d="M11.8 13.2 L9 19.4 C7.6 22 5.6 24 3.8 24.8" fill="none" stroke="#16223f" stroke-width="1.4"/>
</svg>
<!-- dropdown chevrons & launchers -->
<svg style="left:398.6px;top:87px" width="9" height="5"><g><path d="M0 0 L4 4 L8 0" fill="none" stroke="#444" stroke-width="1"/></g></svg>
<svg style="left:468px;top:87px" width="9" height="5"><g><path d="M0 0 L4 4 L8 0" fill="none" stroke="#444" stroke-width="1"/></g></svg>
<svg style="left:851px;top:87px" width="9" height="5"><g><path d="M0 0 L4 4 L8 0" fill="none" stroke="#444" stroke-width="1"/></g></svg>
<svg style="left:257px;top:121px" width="8" height="8"><g><path d="M.5 6 V.5 H6" fill="none" stroke="#4f72c4" stroke-width="1"/><path d="M3 3 L5 5" stroke="#3f62b8" stroke-width="1.2"/><path d="M7 3.6 V7 H3.6Z" fill="#3f62b8"/></g></svg>
<svg style="left:542px;top:121px" width="8" height="8"><g><path d="M.5 6 V.5 H6" fill="none" stroke="#4f72c4" stroke-width="1"/><path d="M3 3 L5 5" stroke="#3f62b8" stroke-width="1.2"/><path d="M7 3.6 V7 H3.6Z" fill="#3f62b8"/></g></svg>
<svg style="left:745px;top:121px" width="8" height="8"><g><path d="M.5 6 V.5 H6" fill="none" stroke="#4f72c4" stroke-width="1"/><path d="M3 3 L5 5" stroke="#3f62b8" stroke-width="1.2"/><path d="M7 3.6 V7 H3.6Z" fill="#3f62b8"/></g></svg>
<svg style="left:854px;top:121px" width="8" height="8"><g><path d="M.5 6 V.5 H6" fill="none" stroke="#4f72c4" stroke-width="1"/><path d="M3 3 L5 5" stroke="#3f62b8" stroke-width="1.2"/><path d="M7 3.6 V7 H3.6Z" fill="#3f62b8"/></g></svg>
<!-- SIDEBAR ICONS -->
<!-- Uebersicht origin (10,171) -->
<svg style="left:10px;top:171px" width="34" height="34" viewBox="0 0 34 34">
<ellipse cx="17" cy="32" rx="10" ry="1.6" fill="#7f94b5" fill-opacity=".45"/>
<path d="M2.4 8.2 L19.6 8.6 L21.6 29 L20.8 32 L1.8 27.6Z" fill="#fcfcfd" stroke="#7a8a98" stroke-width="1"/>
<path d="M1.9 27.5 L20.9 32" stroke="#56687a" stroke-width="1.5"/>
<path d="M3 8.4 l.8 -1.4 l.9 1.4 l.9 -1.4 l.9 1.4 l.9 -1.4 l.9 1.4 l.9 -1.4 l.9 1.4 l.9 -1.4 l.9 1.4 l.9 -1.4 l.9 1.4" stroke="#8d99a6" stroke-width=".8" fill="none"/>
<rect x="4.4" y="12" width="11.5" height="9.2" fill="#d8452c"/>
<path d="M6.6 15 L8.6 13.6 V19.8" stroke="#fff" stroke-width="1.8" fill="none"/>
<path d="M10.8 14.8 C10.8 13.2 14.4 13.2 14.4 15 C14.4 16.4 11 17.8 10.8 19.6 H14.8" stroke="#fff" stroke-width="1.5" fill="none"/>
<path d="M4.4 21.2 H17 L17.8 28.8 L4.6 26Z" fill="#8fc6f0"/>
<path d="M4.6 22.2 H17.2 M4.6 23.9 L17.5 24.9 M6.8 20.6 V26 M9.3 20.6 V26.6 M11.8 20.6 V27.2 M14.4 20.6 V27.8" stroke="#eef7fd" stroke-width=".7"/>
<circle cx="22.5" cy="12" r="9.3" fill="url(#cf)" stroke="#5b6e7e" stroke-width="1.6"/>
<circle cx="22.5" cy="12" r="8" fill="none" stroke="#d0d7de" stroke-width=".6"/>
<g stroke="#444" stroke-width=".9"><path d="M22.5 4.6 v1.8 M22.5 17.6 v1.8 M15.1 12 h1.8 M28.1 12 h1.8 M18.8 5.6 l.8 1.4 M26.2 5.6 l-.8 1.4 M16.1 8.3 l1.4 .8 M28.9 8.3 l-1.4 .8 M16.1 15.7 l1.4 -.8 M28.9 15.7 l-1.4 -.8 M18.8 18.4 l.8 -1.4 M26.2 18.4 l-.8 -1.4"/></g>
<path d="M17.6 7.6 L22.5 12 L25.4 16" stroke="#222" stroke-width="1.2" fill="none"/>
<path d="M20.8 13.6 L27.6 7" stroke="#d23b2e" stroke-width=".9"/>
</svg>
<!-- Mitarbeiter origin (10,221) -->
<svg style="left:10px;top:221px" width="34" height="32" viewBox="0 0 34 32">
<defs><linearGradient id="wbody" x1="0" y1="0" x2=".6" y2="1"><stop offset="0" stop-color="#c84040"/><stop offset="1" stop-color="#7a1717"/></linearGradient>
<linearGradient id="whair" x1="0" y1="0" x2="1" y2="0"><stop offset="0" stop-color="#e3b93e"/><stop offset=".45" stop-color="#fbe88c"/><stop offset="1" stop-color="#d9ac2e"/></linearGradient></defs>
<ellipse cx="14" cy="29.6" rx="12" ry="1.7" fill="#6f86ab" fill-opacity=".4"/>
<path d="M15.5 21.5 C15.5 17 18 15.2 22 15.2 C27 15.2 29.8 17 30.2 21.5 C30.4 24.4 27 25.6 23 25.6 C19 25.6 15.6 24.8 15.5 21.5Z" fill="url(#wbody)"/>
<path d="M15.6 8.6 C15.2 4 17.6 2 21.2 2 C25.2 2 27.2 4.6 27 9.2 C26.8 13.6 27.6 17 28 20.4 C25.6 21 24.4 19.6 24.2 17.4 L18.2 17 C17.6 19.4 17 20.4 15.2 20 C15.8 17 15.9 12.6 15.6 8.6Z" fill="url(#whair)"/>
<path d="M18 16 L21.2 20.6 L24.2 16 L23.8 12 L18.4 12Z" fill="#f0cf94"/>
<ellipse cx="20.8" cy="10.4" rx="3.6" ry="5" fill="#f6dca4"/>
<path d="M17 9.4 C17.4 5.8 19.8 4.6 22.6 5.2 C24.4 5.6 25 7.4 24.6 10 C23.2 8.2 21.4 7.2 19.4 7.4 C18.2 7.6 17.4 8.4 17 9.4Z" fill="url(#whair)"/>
<path d="M1.4 25.2 C1 19.6 4.4 16.6 10 16.4 C15.6 16.2 19.8 18.6 20.3 24.6 C20.5 27.6 16.4 29.4 11 29.4 C5.8 29.4 1.7 28.2 1.4 25.2Z" fill="url(#ubody)"/>
<path d="M6.2 16.8 L9.4 21 L13 16.6 L12.6 13.6 L6.8 13.6Z" fill="#f3d695"/>
<path d="M6.3 17 L9.4 21 L12.9 16.8" fill="none" stroke="#fff" stroke-width="1" stroke-opacity=".75"/>
<ellipse cx="9.3" cy="10.2" rx="4.7" ry="6.4" fill="url(#uskin)"/>
<path d="M4.4 10.4 C3.4 5.6 5.6 2.6 9.2 2.5 C13.6 2.4 15.6 5.6 14.9 10 C14.6 11.6 14.2 12.6 13.6 13.2 C13.7 11.4 13.4 10.4 12.6 10.4 C11.9 9.3 11.4 8 11.3 6.8 C9.2 7.4 6.7 7.4 5.4 7 C4.8 8 4.6 9.2 4.4 10.4Z" fill="url(#uhair)"/>
<ellipse cx="13.3" cy="11.2" rx=".8" ry="1.3" fill="#e9c47c"/>
</svg>
<!-- Projekte wrench origin (10,267) -->
<svg style="left:10px;top:267px" width="34" height="34" viewBox="0 0 34 34">
<defs><linearGradient id="wr" x1="0" y1="0" x2="1" y2="1"><stop offset="0" stop-color="#f2f2f2"/><stop offset=".5" stop-color="#c4c4c4"/><stop offset="1" stop-color="#8f8f8f"/></linearGradient></defs>
<ellipse cx="14" cy="32.6" rx="9" ry="1.2" fill="#7f94b5" fill-opacity=".4"/>
<path d="M23.2 3.6 C25 2.2 27.4 2 29 2.8 L26 6.2 L27 8.8 L29.6 9.2 L32 6.2 C32.6 8 32 10.4 30.2 12 C28.6 13.4 26.4 13.6 24.8 13 L11 27 C11.6 28.6 11.4 30.6 10 32 C8.4 33.4 6.4 33.8 4.6 33 L7.2 30.2 L6.4 27.8 L3.8 27.2 L1.4 30 C.8 28.2 1.4 26 3 24.6 C4.6 23.2 6.4 23 8 23.6 L21.8 9.6 C21.2 7.6 21.6 5 23.2 3.6Z" fill="url(#wr)" stroke="#777" stroke-width=".8"/>
<path d="M9.6 24.4 L23 10.8" stroke="#fff" stroke-width="1.2" stroke-opacity=".8"/>
</svg>
<!-- Ausgabe printer origin (10,317) scaled -->
<svg style="left:10px;top:317px" width="34" height="30" viewBox="0 0 26 23">
<ellipse cx="13" cy="22" rx="10" ry="1.2" fill="#7f94b5" fill-opacity=".4"/>
<path d="M13.6 6 L15 1.4 L17.6 1.2 L18.4 2.4 L19.4 1.2 L23.2 1.4 L24 8Z" fill="#e9ecef" stroke="#6d7276" stroke-width=".6"/>
<path d="M4.4 10.5 C4.4 8 7 5.4 10 5.2 L22 7.4 C24 8 24.6 9 24.6 10 L24.8 16.5 C24.8 18 23 19.4 20 20 L16 20.6 L5 15.6Z" fill="url(#prw)" stroke="#7d858c" stroke-width=".6"/>
<path d="M5.4 9.6 C6 7.6 8 6.2 10 6 L21.6 8 C23 8.4 23.6 9.2 23.2 10.2 C22 12.4 20 12.8 17 12.4 C12 11.8 8 10.6 5.4 9.6Z" fill="url(#prb)"/>
<path d="M4.6 10 C4.6 7.6 7 5.4 10 5.2 L22 7.4 C23.8 7.8 24.4 8.8 24.2 10" fill="none" stroke="#2d6fb4" stroke-width=".8"/>
<path d="M7.2 12 L16.2 14.6 L15.6 17 L7 14.4Z" fill="#15181d"/>
<path d="M8 13.8 L15.4 15.8 L9.6 22 L1 18.4Z" fill="#f5f7f9" stroke="#50565c" stroke-width=".6"/>
<path d="M1 18.4 L9.6 22" stroke="#1d2024" stroke-width="1.1"/>
<circle cx="6" cy="12.6" r=".6" fill="#3c8fe0"/>
</svg>
<!-- Arbeitszeiten clock origin (12,365) -->
<svg style="left:12px;top:365px" width="30" height="32" viewBox="0 0 30 32">
<defs><radialGradient id="cf2" cx=".45" cy=".4" r=".7"><stop offset="0" stop-color="#fff"/><stop offset=".7" stop-color="#eef0f3"/><stop offset="1" stop-color="#bfc6cf"/></radialGradient></defs>
<ellipse cx="15" cy="30.4" rx="10" ry="1.4" fill="#7f94b5" fill-opacity=".45"/>
<circle cx="15" cy="15.3" r="13.2" fill="url(#cf2)" stroke="#6e6e6e" stroke-width="2"/>
<circle cx="15" cy="15.3" r="11.8" fill="none" stroke="#aeb4bb" stroke-width=".6"/>
<g stroke="#aab0b8" stroke-width=".8"><path d="M15 4.6 v2 M15 24 v2 M4.3 15.3 h2 M23.7 15.3 h2"/></g>
<path d="M15 15.3 L9.4 7.4" stroke="#8d939b" stroke-width=".9"/>
<path d="M14 16 L22 14" stroke="#1a1a1a" stroke-width="1.8" stroke-linecap="round"/>
<path d="M15.4 14.6 L10.6 25.4" stroke="#1a1a1a" stroke-width="1.3" stroke-linecap="round"/>
</svg>
<!-- Einstellungen clipboard origin (16,413) -->
<svg style="left:16px;top:413px" width="24" height="34" viewBox="0 0 24 34">
<ellipse cx="13" cy="32" rx="9" ry="1.3" fill="#7f94b5" fill-opacity=".45"/>
<path d="M1.6 4.4 L19.6 5.6 L21 31 L2.6 28.4Z" fill="#2f86d8" stroke="#1f5fa3" stroke-width=".8"/>
<path d="M3.6 6.6 L18 7.6 L19 28 L4.4 26Z" fill="#fbfcfd"/>
<path d="M6 3.8 C6 2.6 8 2.4 8.6 2.4 C9 1 12 1 12.6 2.6 C13.6 2.6 15.4 3 15.4 4.4 L15.6 6.8 L6 6.2Z" fill="#cfd4d9" stroke="#7b848c" stroke-width=".7"/>
<rect x="8" y="11" width="4" height="4" fill="#eee" stroke="#777" stroke-width=".7"/>
<rect x="8.4" y="18.6" width="4" height="4" fill="#fff" stroke="#777" stroke-width=".7"/>
<path d="M7 9.6 L9.6 13.6 L11.6 7.6" stroke="#d2202a" stroke-width="1.6" fill="none"/>
</svg>
<!-- Wartung toolbox origin (10,460) -->
<svg style="left:10px;top:460px" width="34" height="29" viewBox="0 0 34 29">
<defs><linearGradient id="tb" x1="0" y1="0" x2="0" y2="1"><stop offset="0" stop-color="#dfe5eb"/><stop offset=".5" stop-color="#b4bfca"/><stop offset="1" stop-color="#808d9a"/></linearGradient></defs>
<ellipse cx="19" cy="27.6" rx="12" ry="1.3" fill="#7f94b5" fill-opacity=".45"/>
<path d="M9.6 3 L12 1.6 L31 4.4 L32 14 L25.6 16 L9 11Z" fill="#76838f" stroke="#56626e" stroke-width=".7"/>
<path d="M12.6 4 L29.6 6.4 L30 12 L13 9.4Z" fill="#a3afbb"/>
<path d="M15 5 v6 M18 5.4 v6 M21 5.8 v6 M24 6.2 v6 M27 6.6 v5" stroke="#c77a2a" stroke-width="1.2"/>
<path d="M19 6 l2 6 M22.4 6.4 l2 6" stroke="#333" stroke-width=".8"/>
<path d="M1 12.6 L9 10.4 L25.6 14.6 L25.6 27 L1.4 21.6Z" fill="url(#tb)" stroke="#4e5a66" stroke-width=".8"/>
<path d="M25.6 14.6 L32 13.6 L31.6 23 L25.6 27Z" fill="#6a7783" stroke="#4c5864" stroke-width=".7"/>
<path d="M1 12.6 L9 10.4 L25.6 14.6 L17 16.6Z" fill="#7d8a97"/>
<path d="M4 12.6 C5 11 7 11 8 12.4 M7 12 C9 10.4 11 10.8 12 12.4" stroke="#222" stroke-width="1.4" fill="none"/>
<path d="M9.6 13.6 C9.6 9.6 14.6 9 15.8 12.6 L16.6 15 L14 15.6 L13.6 13.6 C13 12 11.6 12.4 11.6 14Z" fill="#f3b21c" stroke="#b57d0a" stroke-width=".5"/>
<path d="M15 13 L22 14.4 L22 15.6 L15.4 14.6Z" fill="#e48a1c"/>
<rect x="10" y="15.6" width="2.6" height="5" fill="#e9b93a" stroke="#9a7414" stroke-width=".5"/>
<path d="M1.2 16.6 L25.4 21.6" stroke="#d9e0e6" stroke-width=".7" stroke-opacity=".8"/>
</svg>
<!-- Lohn euro coin origin (12,509) -->
<svg style="left:12px;top:509px" width="30" height="32" viewBox="0 0 30 32">
<defs><linearGradient id="coin" x1="0" y1="0" x2="1" y2="1"><stop offset="0" stop-color="#f4f4f4"/><stop offset=".5" stop-color="#b9b9b9"/><stop offset="1" stop-color="#7f7f7f"/></linearGradient>
<linearGradient id="coin2" x1="0" y1="0" x2="1" y2="1"><stop offset="0" stop-color="#cdcdcd"/><stop offset=".5" stop-color="#adadad"/><stop offset="1" stop-color="#d4d4d4"/></linearGradient></defs>
<ellipse cx="15" cy="30.2" rx="10" ry="1.4" fill="#7f94b5" fill-opacity=".45"/>
<circle cx="15" cy="15.4" r="13.8" fill="url(#coin)" stroke="#6a6a6a" stroke-width=".9"/>
<circle cx="15" cy="15.4" r="11.6" fill="url(#coin2)" stroke="#8a8a8a" stroke-width=".5"/>
<path d="M20.6 9.6 C16 6.6 11 9.4 10.6 15.4 C10.8 21.8 16 24.4 20.8 21.6 M7.6 13.4 H18 M7.6 17.2 H17.4" stroke="#f8f8f8" stroke-width="1.8" fill="none"/>
<path d="M21.2 10.4 C16.6 7.4 11.8 10 11.4 15.6" stroke="#8a8a8a" stroke-width=".6" fill="none"/>
</svg>
<!-- Mitteilungen origin (10,557) -->
<svg style="left:10px;top:557px" width="34" height="34" viewBox="0 0 34 34">
<defs><linearGradient id="sb" x1="0" y1="0" x2="0" y2="1"><stop offset="0" stop-color="#f4f7fa"/><stop offset=".6" stop-color="#d3dce4"/><stop offset="1" stop-color="#aebbc7"/></linearGradient></defs>
<path d="M17 2.4 C25.4 2.4 31.4 7.4 31.4 13.8 C31.4 20.4 25 25.4 17 25.4 C15 25.4 13.4 25.2 12 24.8 C10.4 27 8 28.6 5.4 29 C6.8 27.2 7.4 25 7.2 23 C4 21 2.4 17.6 2.4 13.8 C2.4 7.4 8.6 2.4 17 2.4Z" fill="url(#sb)" stroke="#5c6d7b" stroke-width="1.1"/>
<path d="M9.6 9.6 H24.4 M9.6 12.6 H24.4 M9.6 15.6 H24.4 M9.6 18.6 H24.4" stroke="#4b5560" stroke-width=".9"/>
<g transform="translate(15.6 14) scale(1.08)"><g>
<path d="M1 15.6 L2.2 11.2 L12 1.6 L15 4.6 L5.4 14.2Z" fill="#f2cf3a" stroke="#8a6d1c" stroke-width=".7"/>
<path d="M3.4 12.4 L13 2.8" stroke="#fbe88a" stroke-width="1.1"/>
<path d="M1 15.6 L2.2 11.2 L5.4 14.2Z" fill="#e8c99a"/>
<path d="M1 15.6 L1.5 13.6 L2.8 14.9Z" fill="#333"/>
<path d="M11 2.6 L12.6 1 C13.3 .3 14.2 .5 15.2 1.5 C16.1 2.4 16.2 3.3 15.6 3.9 L14 5.6Z" fill="#e23b34"/>
<path d="M10.3 3.3 L11.2 2.4 L14.2 5.4 L13.3 6.3Z" fill="#c9ccd1"/>
</g></g>
</svg>
<!-- right panel icons -->
<svg style="left:927px;top:286px" width="17" height="17" viewBox="0 0 17 17"><g>
<path d="M1 15.6 L2.2 11.2 L12 1.6 L15 4.6 L5.4 14.2Z" fill="#f2cf3a" stroke="#8a6d1c" stroke-width=".7"/>
<path d="M3.4 12.4 L13 2.8" stroke="#fbe88a" stroke-width="1.1"/>
<path d="M1 15.6 L2.2 11.2 L5.4 14.2Z" fill="#e8c99a"/>
<path d="M1 15.6 L1.5 13.6 L2.8 14.9Z" fill="#333"/>
<path d="M11 2.6 L12.6 1 C13.3 .3 14.2 .5 15.2 1.5 C16.1 2.4 16.2 3.3 15.6 3.9 L14 5.6Z" fill="#e23b34"/>
<path d="M10.3 3.3 L11.2 2.4 L14.2 5.4 L13.3 6.3Z" fill="#c9ccd1"/>
</g></svg>
<svg style="left:927px;top:309.5px" width="17" height="17" viewBox="0 0 17 17"><g>
<path d="M2 15.3 L7 9.6" stroke="#8a5a22" stroke-width="2.6" stroke-linecap="round"/>
<path d="M2 15.3 L7 9.6" stroke="#d9a258" stroke-width="1.2" stroke-linecap="round"/>
<circle cx="10.5" cy="6" r="4.8" fill="#dff0fb" stroke="#5f6770" stroke-width="1.3"/>
<path d="M7.5 5.5 A3.2 3.2 0 0 1 11 2.8" stroke="#fff" stroke-width="1.1" fill="none"/>
</g></svg>
<svg style="left:931px;top:524.5px" width="17" height="17" viewBox="0 0 17 17"><g>
<path d="M2 15.3 L7 9.6" stroke="#8a5a22" stroke-width="2.6" stroke-linecap="round"/>
<path d="M2 15.3 L7 9.6" stroke="#d9a258" stroke-width="1.2" stroke-linecap="round"/>
<circle cx="10.5" cy="6" r="4.8" fill="#dff0fb" stroke="#5f6770" stroke-width="1.3"/>
<path d="M7.5 5.5 A3.2 3.2 0 0 1 11 2.8" stroke="#fff" stroke-width="1.1" fill="none"/>
</g></svg>
<svg style="left:926px;top:576px" width="18" height="18" viewBox="0 0 18 18">
<defs><radialGradient id="gp2" cx=".5" cy=".55" r=".6"><stop offset="0" stop-color="#3fe018"/><stop offset="1" stop-color="#2f9e14"/></radialGradient></defs>
<path d="M6.4 1.5 h5.2 a.8 .8 0 0 1 .8 .8 v4.1 h4.1 a.8 .8 0 0 1 .8 .8 v3.6 a.8 .8 0 0 1 -.8 .8 h-4.1 v4.1 a.8 .8 0 0 1 -.8 .8 h-5.2 a.8 .8 0 0 1 -.8 -.8 v-4.1 h-4.1 a.8 .8 0 0 1 -.8 -.8 v-3.6 a.8 .8 0 0 1 .8 -.8 h4.1 v-4.1 a.8 .8 0 0 1 .8 -.8z" fill="url(#gp2)" stroke="#1f6e06" stroke-width="1.1"/>
<path d="M7 2.8 h4 M2.2 7.6 h3.6" stroke="#9be680" stroke-width=".8" stroke-opacity=".8"/>
</svg>
<svg style="left:926px;top:599px" width="18" height="18" viewBox="0 0 18 18">
<defs><radialGradient id="rx2" cx=".5" cy=".6" r=".55"><stop offset="0" stop-color="#ff3434"/><stop offset="1" stop-color="#b81818"/></radialGradient></defs>
<path d="M4.2 1.4 L9 6 L13.8 1.4 L16.8 4.4 L12.2 9 L16.8 13.6 L13.8 16.6 L9 12 L4.2 16.6 L1.2 13.6 L5.8 9 L1.2 4.4Z" fill="url(#rx2)" stroke="#8e0f0f" stroke-width="1" stroke-linejoin="round"/>
<path d="M4.3 3 L8.6 7 M13.6 3 L11 5.6" stroke="#f08a8a" stroke-width=".8" stroke-opacity=".7"/>
</svg>
<!-- combo chevrons -->
<svg style="left:829px;top:431.5px" width="9" height="5"><g><path d="M0 0 L4 4 L8 0" fill="none" stroke="#444" stroke-width="1"/></g></svg>
<svg style="left:933px;top:431.5px" width="9" height="5"><g><path d="M0 0 L4 4 L8 0" fill="none" stroke="#444" stroke-width="1"/></g></svg>
<svg style="left:933.5px;top:481.5px" width="9" height="5"><g><path d="M0 0 L4 4 L8 0" fill="none" stroke="#444" stroke-width="1"/></g></svg>
<svg style="left:933.5px;top:506.5px" width="9" height="5"><g><path d="M0 0 L4 4 L8 0" fill="none" stroke="#444" stroke-width="1"/></g></svg>
<svg style="left:912.5px;top:531.5px" width="9" height="5" opacity=".35"><g><path d="M0 0 L4 4 L8 0" fill="none" stroke="#444" stroke-width="1"/></g></svg>
<!-- scroll arrows -->
<svg style="left:908px;top:581px" width="10" height="6"><path d="M0 5.5 L4.5 0 L9 5.5Z" fill="#a3a3a3"/></svg>
<svg style="left:908px;top:653px" width="10" height="6"><path d="M0 0 L4.5 5.5 L9 0Z" fill="#a3a3a3"/></svg>
<!-- sort arrow next to Name -->
<svg style="left:225.5px;top:227.5px" width="16" height="15" viewBox="0 0 16 15">
<path d="M.8 5.8 L6.2 .8 L11.6 5.8 L8.8 5.8 C8.6 8 9.4 9.6 11 10.4 L9 12 C6 11 4.2 8.8 4 5.8Z" fill="#1fdcf2" stroke="#12305a" stroke-width=".9" stroke-linejoin="round"/>
<path d="M5.4 8.6 C6.6 11.8 10.4 13.6 14.2 10.6" stroke="#2a38e0" stroke-width="1.7" fill="none" stroke-linecap="round"/>
<path d="M6 9 C7 11 9.6 12.2 12.4 11" stroke="#7fa6ff" stroke-width=".7" fill="none"/>
</svg>

</body></html>
